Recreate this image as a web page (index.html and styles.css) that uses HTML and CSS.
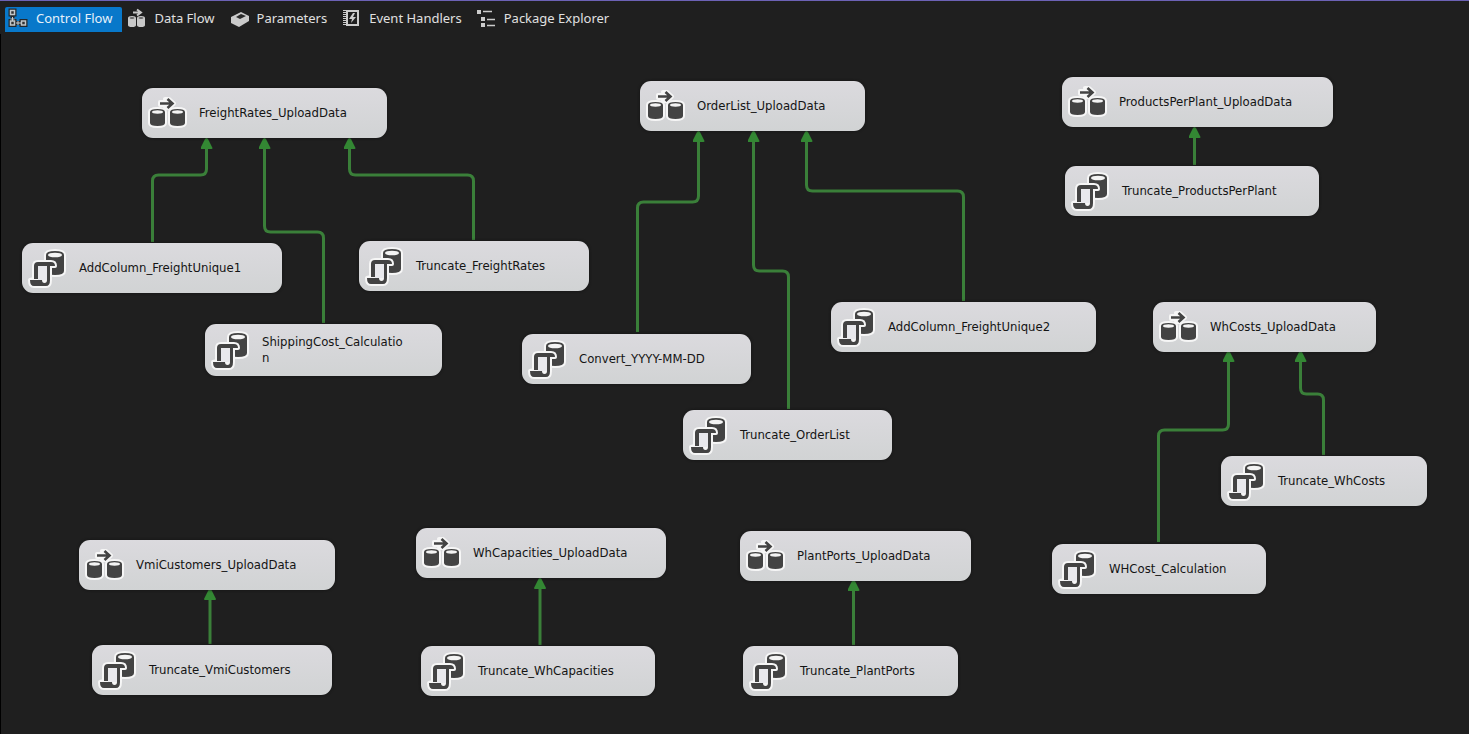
FILE: index.html
```html
<!DOCTYPE html>
<html lang="en">
<head>
<meta charset="utf-8">
<title>Control Flow</title>
<link rel="stylesheet" href="styles.css">
</head>
<body>
<svg class="defs" width="0" height="0" aria-hidden="true">
  <symbol id="flow" viewBox="0 0 40 40">
    <g fill="#f6f6f6" stroke="#f6f6f6" stroke-width="4" stroke-linejoin="round">
      <path d="M3 19q0-3 7.500-3t7.500 3v11q0 3-7.500 3t-7.500-3zM23 19q0-3 7.500-3t7.500 3v11q0 3-7.500 3t-7.500-3z"/>
      <path d="M13 9h8l-3-3h4l5 4.500-5 4.500h-4l3-3h-8z"/>
    </g>
    <path fill="#434343" d="M3 19q0-3 7.500-3t7.500 3v11q0 3-7.500 3t-7.500-3zM23 19q0-3 7.500-3t7.500 3v11q0 3-7.500 3t-7.500-3z"/>
    <ellipse cx="10.500" cy="19" rx="5.500" ry="1.700" fill="#f4f4f4"/>
    <ellipse cx="30.500" cy="19" rx="5.500" ry="1.700" fill="#f4f4f4"/>
    <path d="M13 10.500h12M20.500 6l5 4.500-5 4.500" fill="none" stroke="#434343" stroke-width="2.600"/>
  </symbol>
  <symbol id="sql" viewBox="0 0 40 40">
    <path d="M19 7q0-4 9-4t9 4v16q0 4-9 4t-9-4z" fill="#f6f6f6" stroke="#f6f6f6" stroke-width="4" stroke-linejoin="round"/>
    <path fill="#434343" d="M19 7q0-4 9-4t9 4v16q0 4-9 4t-9-4z"/>
    <ellipse cx="28" cy="7" rx="7" ry="2.300" fill="#f4f4f4"/>
    <path d="M7 31V18q0-4 4-4h13q4 0 4 4h-5v14q0 6-4 6H7q-4 0-4-6z" fill="#f6f6f6" stroke="#f6f6f6" stroke-width="4" stroke-linejoin="round"/>
    <path d="M11 17h9v15h-9z" fill="#e9e9ed"/>
    <path d="M7 31V18q0-4 4-4h13q4 0 4 4h-5v14q0 6-4 6H7q-4 0-4-6h12q0 3 2.500 3t2.500-3V18h-9v13z" fill="#434343"/>
  </symbol>
</svg>

<nav class="tabs" aria-label="Designer views">
  <button class="tab active" type="button">
    <svg class="tab-icon" viewBox="0 0 20 20"><g fill="#333" stroke="#23282c" stroke-width="4"><path d="M2.500 2.500h4v4h-4zM2.500 13h4v4h-4zM13.500 13h4v4h-4z"/></g><path d="M4.500 7v6M7 15h6" stroke="#23282c" stroke-width="4"/><g fill="#333" stroke="#c2c6c8" stroke-width="1.500"><path d="M2.500 2.500h4v4h-4zM2.500 13h4v4h-4zM13.500 13h4v4h-4z"/></g><path d="M4.500 9v4M2.500 11h4M8 15h5M10 13v4" stroke="#c8cdd0"/></svg>
    <span>Control Flow</span>
  </button>
  <button class="tab" type="button">
    <svg class="tab-icon" viewBox="0 0 20 20"><path fill="#c8c8c8" d="M2 10q0-2 4-2t4 2v7q0 2-4 2t-4-2zM11 10q0-2 4-2t4 2v7q0 2-4 2t-4-2z"/><ellipse cx="6" cy="10" rx="2.500" ry=".8" fill="#444"/><ellipse cx="15" cy="10" rx="2.500" ry=".8" fill="#444"/><path d="M7 4.500h7M11 1.500l4 3-4 3" fill="none" stroke="#c8c8c8" stroke-width="2"/></svg>
    <span>Data Flow</span>
  </button>
  <button class="tab" type="button">
    <svg class="tab-icon" viewBox="0 0 20 20"><path d="M2 9l10-5 8 4v5l-10 6-8-4z" fill="#cacaca"/><path d="M7 9l5-3 5 2-6 3z" fill="#292929"/></svg>
    <span>Parameters</span>
  </button>
  <button class="tab" type="button">
    <svg class="tab-icon" viewBox="0 0 20 20"><path d="M6 3h11v14H6z" fill="none" stroke="#ccc" stroke-width="2"/><path d="M3.500 2v16" stroke="#ccc" stroke-width="3" stroke-dasharray="1 1"/><path d="M12 5l-4 6h3l-1 4 5-6h-3l2-4z" fill="#ccc"/></svg>
    <span>Event Handlers</span>
  </button>
  <button class="tab" type="button">
    <svg class="tab-icon" viewBox="0 0 20 20"><path d="M1 2h4v4H1zM5 9h4v4H5zM5 15h4v4H5z" fill="#ccc"/><path d="M7 3.500h9M11 11.500h8M11 17.500h8" stroke="#ccc" stroke-width="1.500"/></svg>
    <span>Package Explorer</span>
  </button>
</nav>

<main class="canvas">
  <svg class="links" aria-hidden="true">
    <defs>
      <marker id="tip" markerUnits="userSpaceOnUse" markerWidth="12" markerHeight="12" refX="1" refY="6" orient="auto"><path d="M0 1Q0 0 1 0L10 4.500Q12 6 10 7.500L1 12Q0 12 0 11z" fill="#338733"/></marker>
    </defs>
    <g transform="translate(0 -34)" fill="none" stroke="#3a7f39" stroke-width="3">
      <path marker-end="url(#tip)" d="M152.500 242V181q0-6 6-6h42q6 0 6-6V148"/>
      <path marker-end="url(#tip)" d="M323.500 323V238q0-6-6-6h-47q-6 0-6-6V148"/>
      <path marker-end="url(#tip)" d="M473.500 240V181q0-6-6-6h-112q-6 0-6-6V148"/>
      <path marker-end="url(#tip)" d="M637.500 332V208q0-6 6-6h49q6 0 6-6V141"/>
      <path marker-end="url(#tip)" d="M788.500 409V277q0-6-6-6h-23q-6 0-6-6V141"/>
      <path marker-end="url(#tip)" d="M963.500 301V197q0-6-6-6h-145q-6 0-6-6V141"/>
      <path marker-end="url(#tip)" d="M1194.500 165V137"/>
      <path marker-end="url(#tip)" d="M1158.500 542V436q0-6 6-6h58q6 0 6-6V361"/>
      <path marker-end="url(#tip)" d="M1323.500 455V400q0-6-6-6h-11q-6 0-6-6V361"/>
      <path marker-end="url(#tip)" d="M210 644V599"/>
      <path marker-end="url(#tip)" d="M540 645V588"/>
      <path marker-end="url(#tip)" d="M853.500 645V590"/>
    </g>
  </svg>

  <div class="node freight-upload"><svg class="icon"><use href="#flow"/></svg><span class="label">FreightRates_UploadData</span></div>
  <div class="node add-column-1"><svg class="icon"><use href="#sql"/></svg><span class="label">AddColumn_FreightUnique1</span></div>
  <div class="node freight-truncate"><svg class="icon"><use href="#sql"/></svg><span class="label">Truncate_FreightRates</span></div>
  <div class="node shipping-cost"><svg class="icon"><use href="#sql"/></svg><span class="label">ShippingCost_Calculatio<wbr>n</span></div>
  <div class="node order-upload"><svg class="icon"><use href="#flow"/></svg><span class="label">OrderList_UploadData</span></div>
  <div class="node convert-date"><svg class="icon"><use href="#sql"/></svg><span class="label">Convert_YYYY-MM-DD</span></div>
  <div class="node order-truncate"><svg class="icon"><use href="#sql"/></svg><span class="label">Truncate_OrderList</span></div>
  <div class="node add-column-2"><svg class="icon"><use href="#sql"/></svg><span class="label">AddColumn_FreightUnique2</span></div>
  <div class="node products-upload"><svg class="icon"><use href="#flow"/></svg><span class="label">ProductsPerPlant_UploadData</span></div>
  <div class="node products-truncate"><svg class="icon"><use href="#sql"/></svg><span class="label">Truncate_ProductsPerPlant</span></div>
  <div class="node whcosts-upload"><svg class="icon"><use href="#flow"/></svg><span class="label">WhCosts_UploadData</span></div>
  <div class="node whcosts-truncate"><svg class="icon"><use href="#sql"/></svg><span class="label">Truncate_WhCosts</span></div>
  <div class="node whcost-calc"><svg class="icon"><use href="#sql"/></svg><span class="label">WHCost_Calculation</span></div>
  <div class="node vmi-upload"><svg class="icon"><use href="#flow"/></svg><span class="label">VmiCustomers_UploadData</span></div>
  <div class="node vmi-truncate"><svg class="icon"><use href="#sql"/></svg><span class="label">Truncate_VmiCustomers</span></div>
  <div class="node capacity-upload"><svg class="icon"><use href="#flow"/></svg><span class="label">WhCapacities_UploadData</span></div>
  <div class="node capacity-truncate"><svg class="icon"><use href="#sql"/></svg><span class="label">Truncate_WhCapacities</span></div>
  <div class="node ports-upload"><svg class="icon"><use href="#flow"/></svg><span class="label">PlantPorts_UploadData</span></div>
  <div class="node ports-truncate"><svg class="icon"><use href="#sql"/></svg><span class="label">Truncate_PlantPorts</span></div>
</main>
</body>
</html>
```
FILE: styles.css
```css
* { box-sizing: border-box; }

body {
  margin: 0;
  min-height: 100vh;
  display: flex;
  flex-direction: column;
  background: #1f1f1f;
  font-family: "Noto Sans", "Open Sans", sans-serif;
  font-size: 13px;
}

.defs { position: absolute; }

.tabs {
  display: flex;
  gap: 1px;
  height: 34px;
  padding: 6px 5px 2px;
  border-top: 1px solid #6c62b5;
}

.tab {
  display: flex;
  align-items: center;
  gap: 8px;
  height: 25px;
  padding: 0 10px 3px 3px;
  border: 0;
  border-radius: 2px 2px 0 0;
  background: transparent;
  color: #e0e0e0;
  font: inherit;
  white-space: nowrap;
}

.tab.active {
  background: #0878ca;
  color: #e6f1fa;
}

.tab-icon { width: 20px; height: 20px; flex: none; }

.canvas {
  position: relative;
  flex: 1;
  overflow: hidden;
  box-shadow: inset 1px 0 #000;
}

.links {
  position: absolute;
  inset: 0;
  width: 100%;
  height: 100%;
}

.node {
  position: absolute;
  display: flex;
  align-items: center;
  gap: 12px;
  min-height: 50px;
  padding: 0 36px 0 5px;
  border-radius: 11px;
  background: linear-gradient(#dbdade, #d1d3d4);
  box-shadow: 0 0 3px #111;
  color: #141414;
  font-family: "DejaVu Sans Condensed", "Noto Sans", sans-serif;
  line-height: 16px;
}

.icon { width: 40px; height: 40px; flex: none; }
.label { white-space: nowrap; }

.freight-upload { left: 142px; top: 54px; width: 245px; }
.add-column-1 { left: 22px; top: 209px; width: 260px; }
.freight-truncate { left: 359px; top: 207px; width: 230px; }
.shipping-cost { left: 205px; top: 290px; width: 237px; min-height: 52px; }
.shipping-cost .label { white-space: normal; }
.order-upload { left: 640px; top: 47px; width: 225px; }
.convert-date { left: 522px; top: 300px; width: 229px; }
.order-truncate { left: 683px; top: 376px; width: 209px; }
.add-column-2 { left: 831px; top: 268px; width: 265px; }
.products-upload { left: 1062px; top: 43px; width: 271px; }
.products-truncate { left: 1065px; top: 132px; width: 254px; }
.whcosts-upload { left: 1153px; top: 268px; width: 223px; }
.whcosts-truncate { left: 1221px; top: 422px; width: 206px; }
.whcost-calc { left: 1052px; top: 510px; width: 214px; }
.vmi-upload { left: 79px; top: 506px; width: 256px; }
.vmi-truncate { left: 92px; top: 611px; width: 240px; }
.capacity-upload { left: 416px; top: 494px; width: 250px; }
.capacity-truncate { left: 421px; top: 612px; width: 234px; }
.ports-upload { left: 740px; top: 497px; width: 231px; }
.ports-truncate { left: 743px; top: 612px; width: 215px; }
```
